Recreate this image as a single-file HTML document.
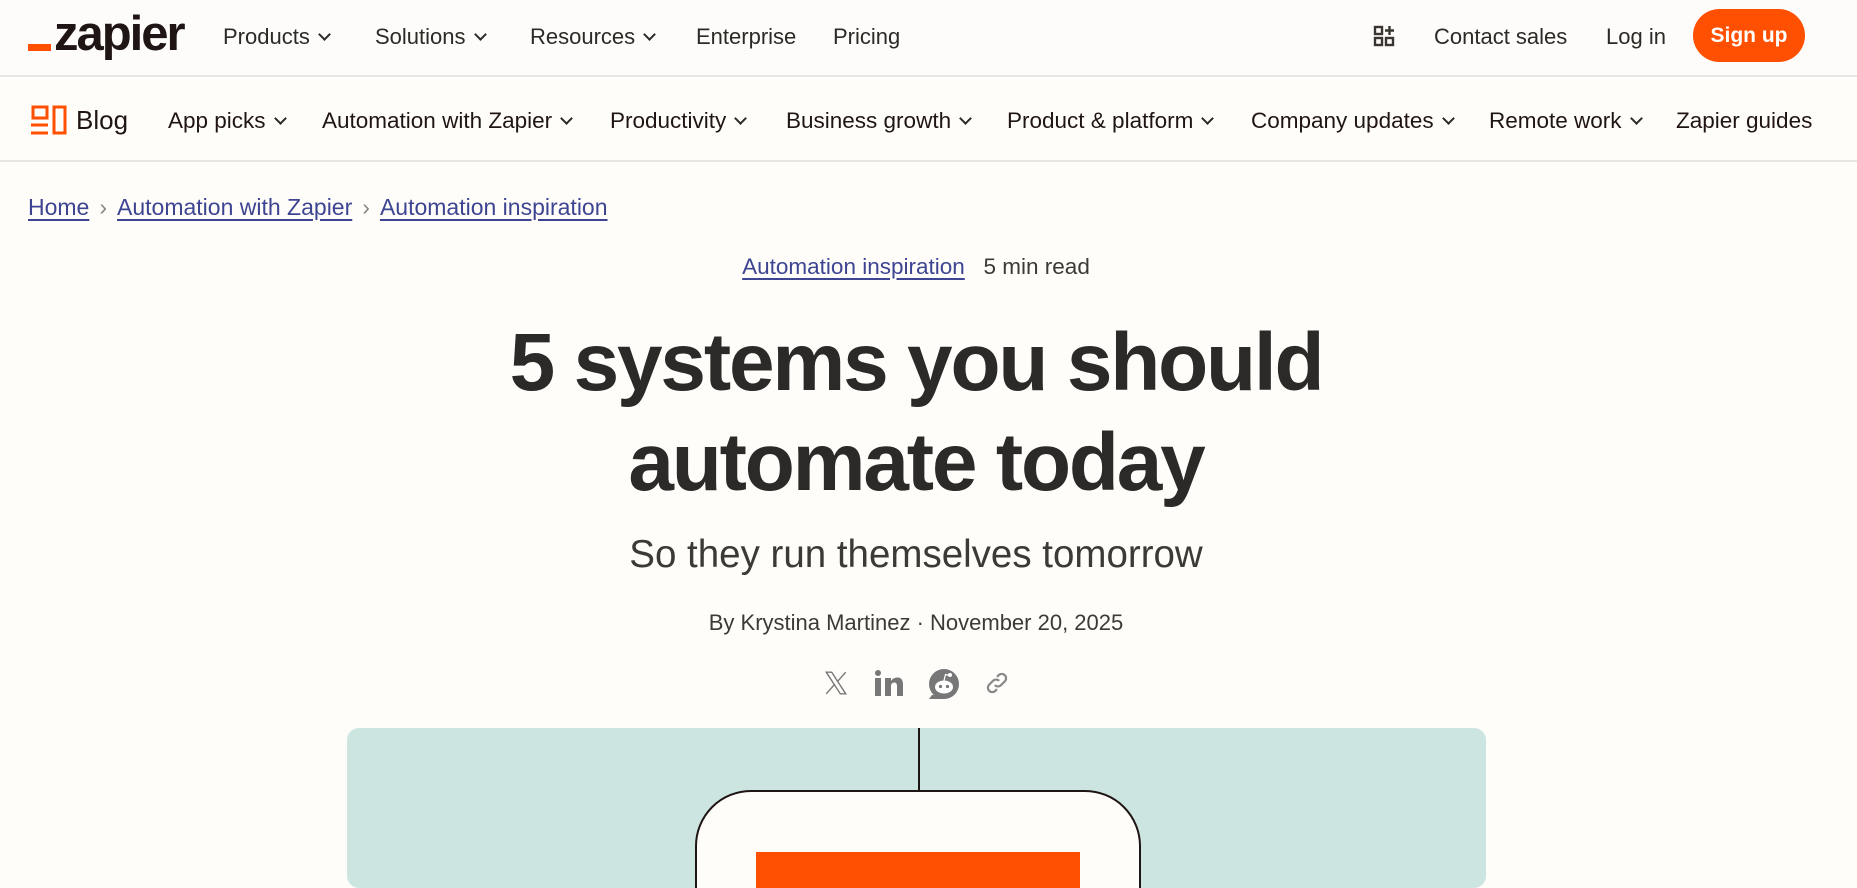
<!DOCTYPE html>
<html><head><meta charset="utf-8">
<style>
*{margin:0;padding:0;box-sizing:border-box}
body{width:1857px;height:871px;overflow:hidden;background:#fffdf9;font-family:"Liberation Sans",sans-serif;color:#201515;position:relative}
.abs{position:absolute;white-space:nowrap}
.top{position:absolute;left:0;top:0;width:1857px;height:77px;background:#fdfcfa;border-bottom:2px solid #e8e6e2}
.blog{position:absolute;left:0;top:78px;width:1857px;height:84px;border-bottom:2px solid #e8e6e2}
.nav{font-size:22px;color:#2d2a26}
.chev{display:inline-block;width:9px;height:9px;border-right:2px solid #2d2a26;border-bottom:2px solid #2d2a26;transform:rotate(45deg);margin-left:10px;position:relative;top:-5px}
.bn{font-size:22.5px;color:#201515}
.bc{color:#3d4592;text-decoration:underline;text-underline-offset:4px}
.ctr{left:0;width:1832px;text-align:center}
</style></head><body>
<div class="top"></div>
<div class="abs" style="left:28px;top:44px;width:23px;height:7px;background:#ff4f00"></div>
<div class="abs" style="left:54px;top:6px;font-size:49px;font-weight:bold;letter-spacing:-2px;color:#201515">zapier</div>
<div class="abs nav" style="left:223px;top:24px">Products<span class="chev"></span></div>
<div class="abs nav" style="left:375px;top:24px">Solutions<span class="chev"></span></div>
<div class="abs nav" style="left:530px;top:24px">Resources<span class="chev"></span></div>
<div class="abs nav" style="left:696px;top:24px">Enterprise</div>
<div class="abs nav" style="left:833px;top:24px">Pricing</div>
<svg class="abs" style="left:1373px;top:25px" width="22" height="22" viewBox="0 0 22 22" fill="none" stroke="#3a3530" stroke-width="2.4"><rect x="2" y="2" width="7" height="7"/><rect x="2" y="13" width="7" height="7"/><rect x="13" y="13" width="7" height="7"/><path d="M16.5 1v9M12 5.5h9"/></svg>
<div class="abs nav" style="left:1434px;top:24px">Contact sales</div>
<div class="abs nav" style="left:1606px;top:24px">Log in</div>
<div class="abs" style="left:1693px;top:9px;width:112px;height:53px;border-radius:27px;background:#ff4f00;color:#fff;font-size:21px;font-weight:bold;text-align:center;line-height:53px">Sign up</div>

<div class="blog"></div>
<svg class="abs" style="left:31px;top:105px" width="36" height="30" viewBox="0 0 36 30" fill="none" stroke="#ff4f00" stroke-width="3"><rect x="2" y="2" width="14" height="11"/><path d="M0 20h17M0 28h17"/><rect x="23" y="2" width="11" height="26"/></svg>
<div class="abs" style="left:76px;top:105px;font-size:26px;color:#201515">Blog</div>
<div class="abs bn" style="left:168px;top:108px">App picks<span class="chev"></span></div>
<div class="abs bn" style="left:322px;top:108px">Automation with Zapier<span class="chev"></span></div>
<div class="abs bn" style="left:610px;top:108px">Productivity<span class="chev"></span></div>
<div class="abs bn" style="left:786px;top:108px">Business growth<span class="chev"></span></div>
<div class="abs bn" style="left:1007px;top:108px">Product &amp; platform<span class="chev"></span></div>
<div class="abs bn" style="left:1251px;top:108px">Company updates<span class="chev"></span></div>
<div class="abs bn" style="left:1489px;top:108px">Remote work<span class="chev"></span></div>
<div class="abs bn" style="left:1676px;top:108px">Zapier guides</div>

<div class="abs" style="left:28px;top:194px;font-size:23px">
<span class="bc">Home</span><span style="color:#888;margin:0 10px">›</span><span class="bc">Automation with Zapier</span><span style="color:#888;margin:0 10px">›</span><span class="bc">Automation inspiration</span></div>

<div class="abs ctr" style="top:254px;font-size:22.5px;color:#3d3a36"><span class="bc">Automation inspiration</span>&nbsp;&nbsp;&nbsp;5 min read</div>

<div class="abs ctr" style="top:313px;font-size:82px;font-weight:bold;line-height:100px;letter-spacing:-2.2px;color:#2b2a28;white-space:normal">5 systems you should<br>automate today</div>

<div class="abs ctr" style="top:533px;font-size:38.5px;color:#3d3a36">So they run themselves tomorrow</div>
<div class="abs ctr" style="top:610px;font-size:22px;color:#3d3a36">By Krystina Martinez · November 20, 2025</div>

<svg class="abs" style="left:823px;top:670px" width="26" height="26" viewBox="0 0 24 24" fill="none" stroke="#777" stroke-width="1.3"><path d="M3 2h5l13 20h-5zM21 2l-8 9M3 22l8-9"/></svg>
<svg class="abs" style="left:874px;top:669px" width="30" height="28" viewBox="0 0 30 28" fill="#777"><circle cx="4" cy="4" r="3"/><rect x="1" y="9" width="6" height="18"/><path d="M11 9h6v3c1.5-2.5 4-3.5 6.5-3.5 4 0 5.5 3 5.5 7V27h-6V17c0-2-.6-3.5-2.6-3.5S17 15 17 17v10h-6z"/></svg>
<svg class="abs" style="left:928px;top:668px" width="32" height="32" viewBox="0 0 32 32"><circle cx="16" cy="16" r="15" fill="#777"/><path d="M1 31h15v-4H4z" fill="#777"/><ellipse cx="16" cy="19" rx="9" ry="6.5" fill="#fff"/><circle cx="12.5" cy="18.5" r="1.6" fill="#777"/><circle cx="19.5" cy="18.5" r="1.6" fill="#777"/><circle cx="22" cy="7" r="2" fill="#fff"/><path d="M16 12.5l1.5-6 4 1" stroke="#fff" stroke-width="1.2" fill="none"/></svg>
<svg class="abs" style="left:984px;top:670px" width="26" height="26" viewBox="0 0 24 24" fill="none" stroke="#888" stroke-width="2"><path d="M10 14a4 4 0 0 0 5.7 0l3.5-3.5a4 4 0 0 0-5.7-5.7l-1.5 1.5M14 10a4 4 0 0 0-5.7 0l-3.5 3.5a4 4 0 0 0 5.7 5.7l1.5-1.5"/></svg>

<div class="abs" style="left:347px;top:728px;width:1139px;height:160px;background:#cde5e1;border-radius:12px;overflow:hidden">
<div style="position:absolute;left:571px;top:0;width:2px;height:63px;background:#201515"></div>
<div style="position:absolute;left:348px;top:62px;width:446px;height:200px;border:2.5px solid #201515;border-radius:56px;background:#fffdf9"></div>
<div style="position:absolute;left:409px;top:124px;width:324px;height:60px;background:#ff4f00"></div>
</div>
</body></html>
